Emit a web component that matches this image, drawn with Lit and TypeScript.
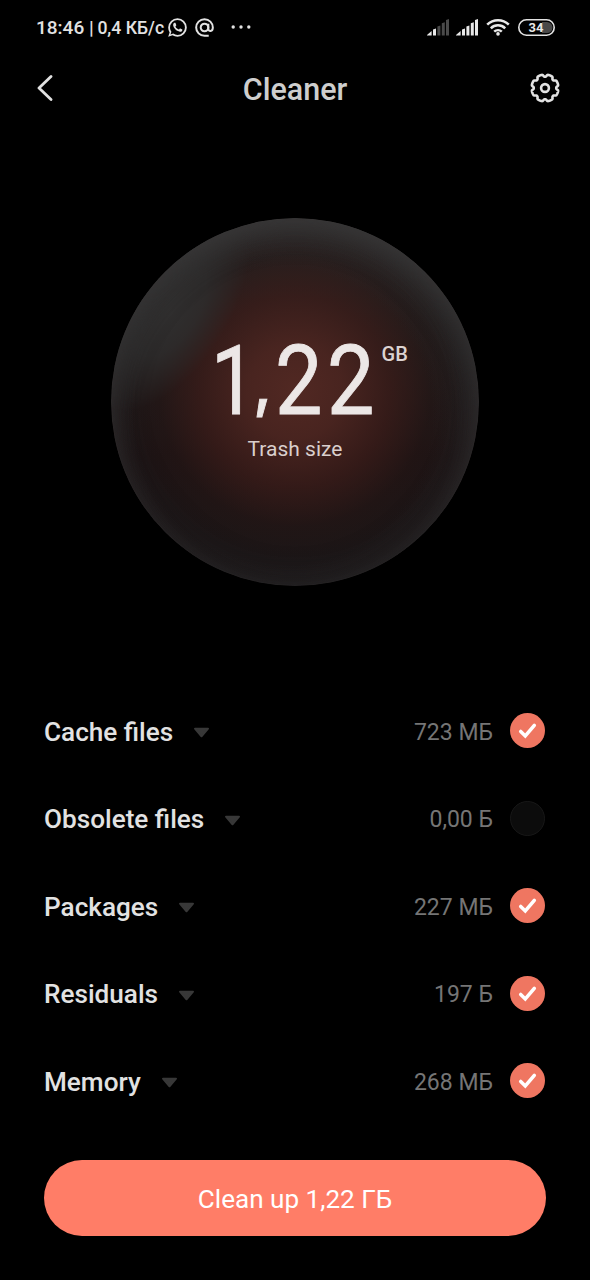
import { LitElement, html, css, svg } from "lit";
import { customElement, property } from "lit/decorators.js";

const gear = () => {
  const pts: string[] = [];
  const steps = 240;
  for (let i = 0; i < steps; i++) {
    const a = (i / steps) * Math.PI * 2;
    const c = Math.cos(a * 8 + Math.PI);
    const r = 12.3 + 1.2 * Math.tanh(c * 2.6 + 1.3);
    pts.push(`${(15 + r * Math.cos(a)).toFixed(2)},${(15 + r * Math.sin(a)).toFixed(2)}`);
  }
  return "M" + pts.join("L") + "Z";
};

@customElement("category-row")
export class CategoryRow extends LitElement {
  @property() label = "";
  @property() size = "";
  @property({ type: Boolean }) checked = false;
  static styles = css`
    :host { display: flex; align-items: center; height: 87.5px; }
    .label { font-size: 26.15px; font-weight: 500; color: #e2e2e2; line-height: 36px; }
    .caret { display: block; margin: 2px 0 0 20px; flex: none; }
    .size { margin-left: auto; padding-top: 2px; font-size: 23px; color: #757575; line-height: 32px; }
    .check { display: block; margin: 0 1px 2px 17px; flex: none; }
  `;
  render() {
    return html`
      <span class="label">${this.label}</span>
      <svg class="caret" width="17" height="11" viewBox="0 0 17 11"><path d="M2 1.7H15L8.5 9.3Z" fill="#383838" stroke="#383838" stroke-width="2" stroke-linejoin="round" /></svg>
      <span class="size">${this.size}</span>
      <svg class="check" width="35" height="35" viewBox="0 0 35 35">
        ${this.checked
          ? svg`<circle cx="17.5" cy="17.5" r="17.5" fill="#ef7661"/><path d="M10.7 18.4L15.3 23L24.3 12.4" fill="none" stroke="#fff" stroke-width="3.5" stroke-linecap="round" stroke-linejoin="miter"/>`
          : svg`<circle cx="17.5" cy="17.5" r="17" fill="#0c0c0c" stroke="#181818"/>`}
      </svg>`;
  }
}

@customElement("app-root")
export class AppRoot extends LitElement {
  static styles = css`
    :host { display: flex; flex-direction: column; width: 590px; height: 1280px; background: #000; color: #e2e2e2; font-family: Roboto, "Noto Sans", sans-serif; overflow: hidden; }
    svg { display: block; flex: none; }
    .status { display: flex; align-items: center; height: 54px; box-sizing: border-box; padding: 0 35px 0 36px; }
    .clock { font-size: 19px; font-weight: 500; line-height: 24px; white-space: pre; padding-top: 2px; }
    .rate { font-size: 17.6px; font-weight: 500; line-height: 24px; width: 66px; white-space: nowrap; margin-left: -1px; padding-top: 2px; }
    .wa { margin-left: 5px; }
    .at { margin-left: 8px; }
    .dots { margin-left: 17px; }
    .sig1 { margin-left: auto; }
    .sig2 { margin-left: 7px; }
    .wifi { margin-left: 8px; }
    .battery { margin-left: 8px; }
    .battery text { font-size: 13px; font-weight: 700; font-family: Roboto, sans-serif; }
    .bar { display: grid; grid-template-columns: 60px 1fr 60px; align-items: center; height: 68px; }
    .back { margin-left: 36px; }
    .title { text-align: center; font-size: 30.5px; font-weight: 500; line-height: 40px; padding-top: 3px; color: #cecece; }
    .stage { display: flex; justify-content: center; padding-top: 96px; height: 566px; box-sizing: border-box; }
    .orb { position: relative; overflow: hidden; width: 368px; height: 368px; border-radius: 50%; display: flex; flex-direction: column; align-items: center; box-sizing: border-box; padding-top: 112px;
      background:
        radial-gradient(circle 190px at 47% 54%, rgba(46,46,47,0) 78%, rgba(46,46,47,.3) 100%),
        radial-gradient(circle 170px at 50% 47%, rgba(84,41,35,.95) 0%, rgba(76,37,32,.92) 28%, rgba(60,28,25,.75) 56%, rgba(42,21,19,.35) 80%, rgba(30,18,18,0) 100%),
        linear-gradient(180deg, #2a2727 0%, #211d1d 30%, #1c1415 65%, #1b1718 100%); }
    .sheen { position: absolute; left: -52px; top: 40px; width: 224px; height: 110px; border-radius: 50%; transform: rotate(-56deg); background: radial-gradient(closest-side, rgba(49,48,48,.95), rgba(47,47,47,.75) 45%, rgba(46,46,46,0)); }
    .rim { position: absolute; inset: 0; border-radius: 50%; box-shadow: inset 0 18px 30px -8px rgba(62,61,61,.8), inset 0 0 32px rgba(42,42,43,.65), inset 0 0 2px rgba(60,60,60,.4); }
    .total { position: relative; display: flex; align-items: flex-start; height: 102px; margin-left: 27px; color: #ece7e6; }
    .num { display: flex; height: 102px; font-size: 97px; line-height: 102px; font-weight: 400; -webkit-text-stroke: 0.9px #ece7e6; }
    .num span { display: block; width: 52px; height: 102px; transform: scaleX(.87); transform-origin: 0 0; }
    .num .one { width: 43px; margin-left: 2px; transform: scaleX(.83); }
    .num .comma { width: 20.6px; font-family: Inter, Roboto, sans-serif; font-weight: 500; font-size: 62px; line-height: 108px; transform: none; text-indent: -1px; }
    .unit { font-size: 20px; line-height: 24px; font-weight: 500; margin: 12px 0 0 2.7px; color: #dcd3d1; }
    .caption { position: relative; font-size: 21px; line-height: 28px; color: #dacfcd; margin-top: 3px; }
    .list { padding: 0 44px; }
    .cta { margin: 34px 44px 0; height: 76px; box-sizing: border-box; padding-top: 2px; border-radius: 38px; background: #ff7d67; color: #fff; font-size: 26.1px; display: flex; align-items: center; justify-content: center; }
  `;
  rows = [
    { label: "Cache files", size: "723 МБ", on: true },
    { label: "Obsolete files", size: "0,00 Б", on: false },
    { label: "Packages", size: "227 МБ", on: true },
    { label: "Residuals", size: "197 Б", on: true },
    { label: "Memory", size: "268 МБ", on: true },
  ];
  signal(cls: string, lit: number) {
    return html`<svg class=${cls} width="22" height="17" viewBox="0 0 22 17">
      ${[0, 1, 2, 3, 4].map((i) => {
        const x = [0, 6, 10.4, 14.8, 19][i], w = i ? 3 : 4.6, h = [4.5, 7.2, 10.2, 13.4, 16.5][i];
        return svg`<path d="M${x} ${16.6 - h + (i ? 1 : 4)}L${x + w} ${16.6 - h}V16.6H${x}Z" fill=${i < lit ? "#e8e8e8" : "#4a4a4a"} />`;
      })}
    </svg>`;
  }
  render() {
    return html`
      <div class="status">
        <span class="clock">18:46 | </span><span class="rate">0,4 КБ/с</span>
        <svg class="wa" width="19" height="19" viewBox="1.8 1.8 20.4 20.4" fill="#e2e2e2"><path d="M16.75 13.96c.25.13.41.2.46.3.06.11.04.61-.21 1.18-.2.56-1.24 1.1-1.7 1.12-.46.02-.47.36-2.96-.73-2.49-1.09-3.99-3.75-4.11-3.92-.12-.17-.96-1.38-.92-2.61.05-1.22.69-1.8.95-2.04.24-.26.51-.29.68-.26h.47c.15 0 .36-.06.55.45l.69 1.87c.06.13.1.28.01.44l-.27.41-.39.42c-.12.12-.26.25-.12.5.12.26.62 1.09 1.32 1.78.91.88 1.71 1.17 1.95 1.3.24.14.39.12.54-.04l.81-.94c.19-.25.35-.19.58-.11l1.67.88M12 2a10 10 0 0 1 10 10 10 10 0 0 1-10 10c-1.97 0-3.8-.57-5.35-1.55L2 22l1.55-4.65A9.969 9.969 0 0 1 2 12 10 10 0 0 1 12 2m0 2a8 8 0 0 0-8 8c0 1.72.54 3.31 1.46 4.61L4.5 19.5l2.89-.96A7.95 7.95 0 0 0 12 20a8 8 0 0 0 8-8 8 8 0 0 0-8-8z"/></svg>
        <svg class="at" width="19" height="19" viewBox="0 0 18 18" fill="none" stroke="#e2e2e2" stroke-width="1.9"><circle cx="9" cy="9" r="3.6"/><path d="M12.6 5.4V10.2C12.6 13.2 16.9 13.2 16.9 9A7.9 7.9 0 1 0 9 16.9H13"/></svg>
        <svg class="dots" width="20" height="4" viewBox="0 0 20 4" fill="#e2e2e2"><circle cx="2.2" cy="2" r="1.7"/><circle cx="10" cy="2" r="1.7"/><circle cx="17.8" cy="2" r="1.7"/></svg>
        ${this.signal("sig1", 2)} ${this.signal("sig2", 5)}
        <svg class="wifi" width="24" height="17" viewBox="0 0 24 17" fill="none" stroke="#e8e8e8" stroke-width="2.5"><path d="M1.2 5.7A15.5 15.5 0 0 1 22.8 5.7M4.8 9.3A10.3 10.3 0 0 1 19.2 9.3M8.2 12.7A5.5 5.5 0 0 1 15.8 12.7"/><circle cx="12" cy="14.9" r="1.8" fill="#e8e8e8" stroke="none"/></svg>
        <svg class="battery" width="37" height="17" viewBox="0 0 37 17"><path d="M24 3H29A5.5 5.5 0 0 1 29 14H24Z" fill="#484848"/><rect x=".8" y=".8" width="35.4" height="15.4" rx="7.7" fill="none" stroke="#e2e2e2" stroke-width="1.6"/><text x="18" y="13.1" text-anchor="middle" fill="#e8e8e8">34</text></svg>
      </div>
      <div class="bar">
        <svg class="back" width="18" height="26" viewBox="0 0 18 26" fill="none" stroke="#e2e2e2" stroke-width="2.8" stroke-linecap="round" stroke-linejoin="round"><path d="M15 1.5L3 13L15 24.5"/></svg>
        <div class="title">Cleaner</div>
        <svg width="30" height="30" viewBox="0 0 30 30" fill="none" stroke="#e2e2e2" stroke-width="2.6"><path d=${gear()} stroke-linejoin="round"/><circle cx="15" cy="15" r="3.9"/></svg>
      </div>
      <div class="stage">
        <div class="orb">
          <div class="sheen"></div>
          <div class="rim"></div>
          <div class="total">
            <div class="num"><span class="one">1</span><span class="comma">,</span><span>2</span><span>2</span></div>
            <div class="unit">GB</div>
          </div>
          <div class="caption">Trash size</div>
        </div>
      </div>
      <div class="list">
        ${this.rows.map((r) => html`<category-row .label=${r.label} .size=${r.size} .checked=${r.on}></category-row>`)}
      </div>
      <div class="cta">Clean up 1,22 ГБ</div>`;
  }
}
